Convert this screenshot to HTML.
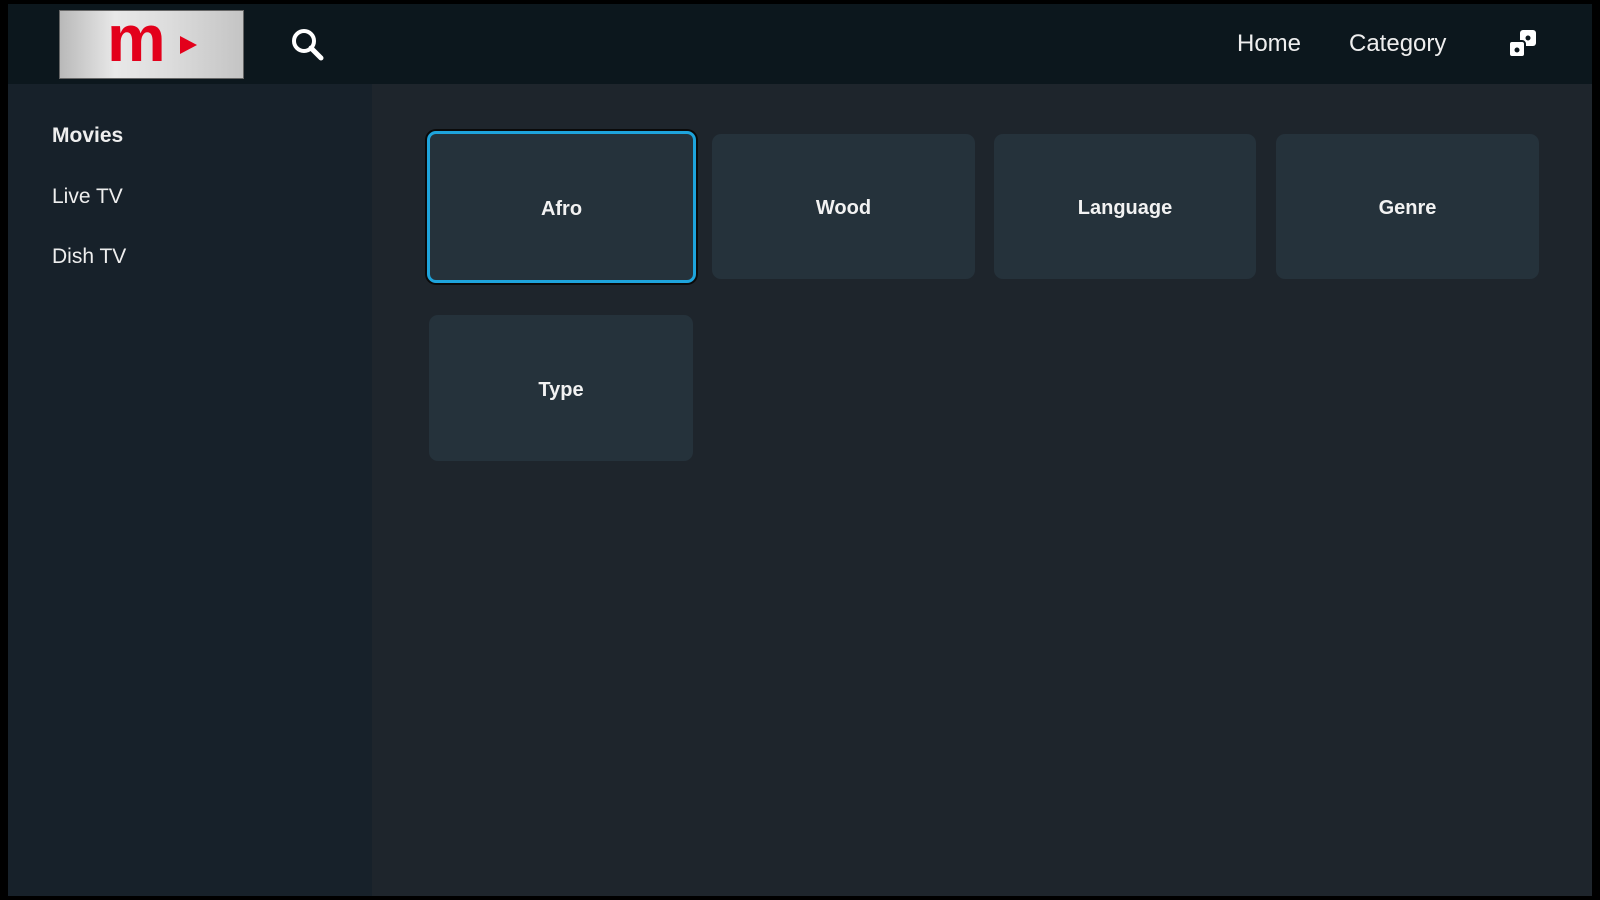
<!DOCTYPE html>
<html><head><meta charset="utf-8"><style>
*{margin:0;padding:0;box-sizing:border-box}
body{width:1600px;height:900px;background:#000;position:relative;overflow:hidden;font-family:"Liberation Sans",sans-serif;color:#fff}
#hdr{position:absolute;left:8px;top:4px;width:1584px;height:80px;background:#0c171d}
#side{position:absolute;left:8px;top:84px;width:364px;height:812px;background:#17212a}
#main{position:absolute;left:372px;top:84px;width:1220px;height:812px;background:#1e252c}
.logo{position:absolute;left:59px;top:10px;width:185px;height:69px;background:linear-gradient(90deg,#b9b9b9,#e8e8e8 30%,#dcdcdc 60%,#c4c4c4);border:1px solid #666;overflow:hidden}
.logo span{position:absolute;left:47px;top:-6px;font-size:66px;font-weight:bold;color:#e3001b;font-family:"Liberation Sans",sans-serif;line-height:1}
.logo i{position:absolute;left:120px;top:25px;width:0;height:0;border-top:9px solid transparent;border-bottom:9px solid transparent;border-left:17px solid #e3001b}
.nav{position:absolute;top:30px;font-size:24px;line-height:28px;color:#eee}
.sl{position:absolute;left:52px;font-size:21px;line-height:26px;color:#eee}
.card{position:absolute;background:#25323b;border-radius:9px;display:flex;align-items:center;justify-content:center;font-size:20px;font-weight:bold;color:#f2f2f2;padding-top:4px}
.sel{border:3px solid #1ea4dc;box-shadow:0 0 0 2px #0a0a0a}
</style></head><body>
<div id="hdr"></div><div id="side"></div><div id="main"></div>
<div class="logo"><span>m</span><i></i></div>
<svg style="position:absolute;left:289px;top:26px" width="40" height="36" viewBox="0 0 40 36"><circle cx="15" cy="15" r="10" fill="none" stroke="#fff" stroke-width="4"/><line x1="22" y1="22" x2="32" y2="32" stroke="#fff" stroke-width="5" stroke-linecap="round"/></svg>
<div class="nav" style="left:1237px">Home</div>
<div class="nav" style="left:1349px">Category</div>
<svg style="position:absolute;left:1507px;top:28px" width="32" height="32" viewBox="0 0 32 32"><rect x="13" y="2" width="16" height="16" rx="3" fill="#fff"/><rect x="2" y="13" width="16" height="16" rx="3" fill="#fff" stroke="#0c171d" stroke-width="2"/><circle cx="10" cy="22" r="2.5" fill="#0c171d"/><circle cx="21" cy="10" r="2.5" fill="#0c171d"/></svg>
<div class="sl" style="top:123px;font-weight:bold">Movies</div>
<div class="sl" style="top:184px">Live TV</div>
<div class="sl" style="top:244px">Dish TV</div>
<div class="card sel" style="left:427px;top:131px;width:269px;height:152px">Afro</div>
<div class="card" style="left:712px;top:134px;width:263px;height:145px">Wood</div>
<div class="card" style="left:994px;top:134px;width:262px;height:145px">Language</div>
<div class="card" style="left:1276px;top:134px;width:263px;height:145px">Genre</div>
<div class="card" style="left:429px;top:315px;width:264px;height:146px">Type</div>
</body></html>
